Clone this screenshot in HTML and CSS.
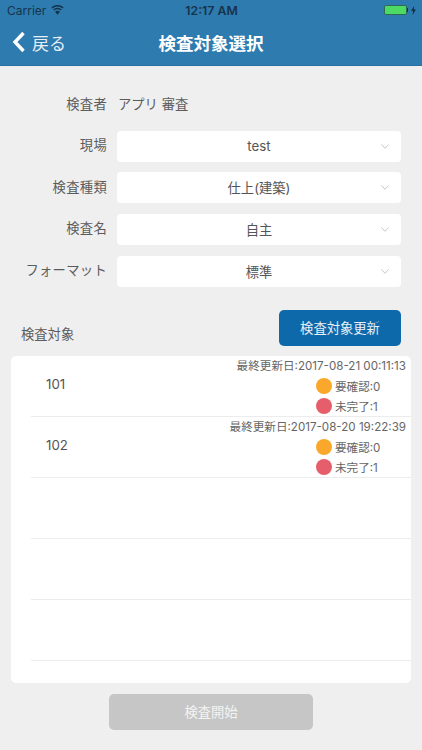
FILE: index.html
```html
<!DOCTYPE html>
<html lang="ja">
<head>
<meta charset="utf-8">
<title>検査対象選択</title>
<link rel="stylesheet" href="styles.css">
</head>
<body>
<header class="header">
  <div class="status">
    <div class="status-left">
      <span>Carrier</span>
      <svg class="wifi" width="13" height="10" viewBox="0 0 14 10"><path d="M7 10 4.400 6.900a4 4 0 0 1 5.200 0Z" fill="#17334a"/><path d="M3 5a6 6 0 0 1 8 0M1 2.700a9 9 0 0 1 12 0" fill="none" stroke="#17334a" stroke-width="1.700"/></svg>
    </div>
    <div class="status-time">12:17 AM</div>
    <div class="status-right">
      <span class="battery"><span class="battery-fill"></span></span><span class="battery-tip"></span>
      <svg width="5" height="9" viewBox="0 0 5 9"><path d="M3 0 0 5h2L1.600 9 5 3.600H3Z" fill="#17334a"/></svg>
    </div>
  </div>
  <nav class="nav">
    <div class="back">
      <svg width="14" height="22" viewBox="0 0 14 22"><path d="M11.500 2 3 11l8.500 9" fill="none" stroke="#fff" stroke-width="3.400"/></svg>
      <span>戻る</span>
    </div>
    <h1 class="title">検査対象選択</h1>
  </nav>
</header>
<main class="main">
  <section class="form">
    <div class="row row-static"><div class="label">検査者</div><div class="value">アプリ 審査</div></div>
    <div class="row"><div class="label">現場</div><div class="select"><span>test</span><svg class="chev" width="8" height="5" viewBox="0 0 8 5"><path d="M.5.5 4 4.300 7.500.5" fill="none" stroke="#c6c6c6"/></svg></div></div>
    <div class="row"><div class="label">検査種類</div><div class="select"><span>仕上(建築)</span><svg class="chev" width="8" height="5" viewBox="0 0 8 5"><path d="M.5.5 4 4.300 7.500.5" fill="none" stroke="#c6c6c6"/></svg></div></div>
    <div class="row"><div class="label">検査名</div><div class="select"><span>自主</span><svg class="chev" width="8" height="5" viewBox="0 0 8 5"><path d="M.5.5 4 4.300 7.500.5" fill="none" stroke="#c6c6c6"/></svg></div></div>
    <div class="row"><div class="label">フォーマット</div><div class="select"><span>標準</span><svg class="chev" width="8" height="5" viewBox="0 0 8 5"><path d="M.5.5 4 4.300 7.500.5" fill="none" stroke="#c6c6c6"/></svg></div></div>
  </section>
  <section class="target-head">
    <div class="target-label">検査対象</div>
    <button class="update">検査対象更新</button>
  </section>
  <section class="list">
    <div class="item">
      <div class="item-name">101</div>
      <div class="item-info">
        <div class="date">最終更新日:2017-08-21 00:11:13</div>
        <div class="stat"><i class="dot orange"></i><span>要確認:0</span></div>
        <div class="stat"><i class="dot red"></i><span>未完了:1</span></div>
      </div>
    </div>
    <div class="item">
      <div class="item-name">102</div>
      <div class="item-info">
        <div class="date">最終更新日:2017-08-20 19:22:39</div>
        <div class="stat"><i class="dot orange"></i><span>要確認:0</span></div>
        <div class="stat"><i class="dot red"></i><span>未完了:1</span></div>
      </div>
    </div>
    <div class="item"></div>
    <div class="item"></div>
    <div class="item"></div>
  </section>
  <div class="footer"><button class="start">検査開始</button></div>
</main>
</body>
</html>
```
FILE: styles.css
```css
* { box-sizing: border-box; }
html, body { margin: 0; padding: 0; }
body {
  width: 422px;
  height: 750px;
  overflow: hidden;
  background: #efefef;
  color: #555;
  font-family: "Inter", "Noto Sans CJK JP", sans-serif;
}
.header {
  height: 66px;
  background: #2e7bb0;
  border-bottom: 1px solid #2a6f9f;
}
.status {
  height: 20px;
  display: grid;
  grid-template-columns: 1fr auto 1fr;
  align-items: center;
  padding: 0 6px 0 7px;
  font-size: 12px;
  color: #17334a;
}
.status-left { display: flex; align-items: center; gap: 5px; }
.status-time { font-weight: 600; font-size: 12.300px; }
.status-right { display: flex; align-items: center; justify-content: flex-end; }
.status-right svg { margin-left: 3px; }
.battery { width: 23px; height: 10px; border: 1px solid #2f6a52; border-radius: 2px; padding: 0; display: block; }
.battery-fill { display: block; height: 100%; background: #4cd964; border-radius: 1px; }
.battery-tip { width: 1px; height: 4px; background: #17334a; }
.nav {
  position: relative;
  height: 44px;
  display: flex;
  align-items: center;
  justify-content: center;
}
.back {
  position: absolute;
  left: 12px;
  top: 0;
  height: 44px;
  display: flex;
  align-items: center;
  gap: 6px;
  color: #e6eef5;
  font-size: 17px;
}
.title { margin: 0; font-size: 17.500px; font-weight: 700; color: #fff; }
.form {
  padding: 21px 21px 0 0;
  display: flex;
  flex-direction: column;
  gap: 10.670px;
}
.row { display: flex; align-items: center; height: 31px; }
.row-static { height: 30px; margin-bottom: 3px; padding-top: 2px; }
.label {
  width: 107px;
  text-align: right;
  font-size: 13.300px;
  letter-spacing: 0.3px;
  color: #5c5c5c;
  padding-bottom: 3px;
}
.row-static .label { padding-bottom: 0; }
.value { margin-left: 11px; font-size: 13.300px; color: #5c5c5c; }
.select {
  position: relative;
  margin-left: 10px;
  flex: 1;
  height: 31px;
  background: #fff;
  border-radius: 4px;
  display: flex;
  align-items: center;
  justify-content: center;
  font-size: 13.300px;
  color: #555;
}
.chev { position: absolute; right: 12px; top: 13px; }
.target-head {
  margin-top: 23px;
  padding: 0 21px;
  display: flex;
  justify-content: space-between;
  align-items: flex-end;
}
.target-label { font-size: 13.300px; color: #5c5c5c; padding-bottom: 3px; }
.update {
  width: 122px;
  height: 36px;
  border: 0;
  border-radius: 5px;
  background: #0e69aa;
  color: #e8f0f6;
  font: inherit;
  font-size: 13.300px;
}
.list {
  margin: 10px 11px 0;
  height: 327px;
  background: #fff;
  border-radius: 5px;
  overflow: hidden;
}
.item {
  height: 61px;
  margin-left: 20px;
  border-bottom: 1px solid #ececec;
  position: relative;
  display: flex;
  justify-content: space-between;
}
.item-name { margin: 20px 0 0 15px; font-size: 13.300px; color: #555; }
.item-info {
  padding-right: 5px;
  display: flex;
  flex-direction: column;
  align-items: flex-end;
  font-size: 11.600px;
  color: #666;
}
.date { height: 20px; line-height: 20px; }
.stat {
  width: 90px;
  height: 20px;
  display: flex;
  align-items: center;
  gap: 3px;
}
.dot { width: 16px; height: 16px; border-radius: 50%; display: block; }
.orange { background: #f9a82b; }
.red { background: #e65e6b; }
.footer { padding-top: 11px; display: flex; justify-content: center; }
.start {
  width: 204px;
  height: 36px;
  border: 0;
  border-radius: 5px;
  background: #c6c6c6;
  color: #f4f4f4;
  font: inherit;
  font-size: 13.300px;
}
```
